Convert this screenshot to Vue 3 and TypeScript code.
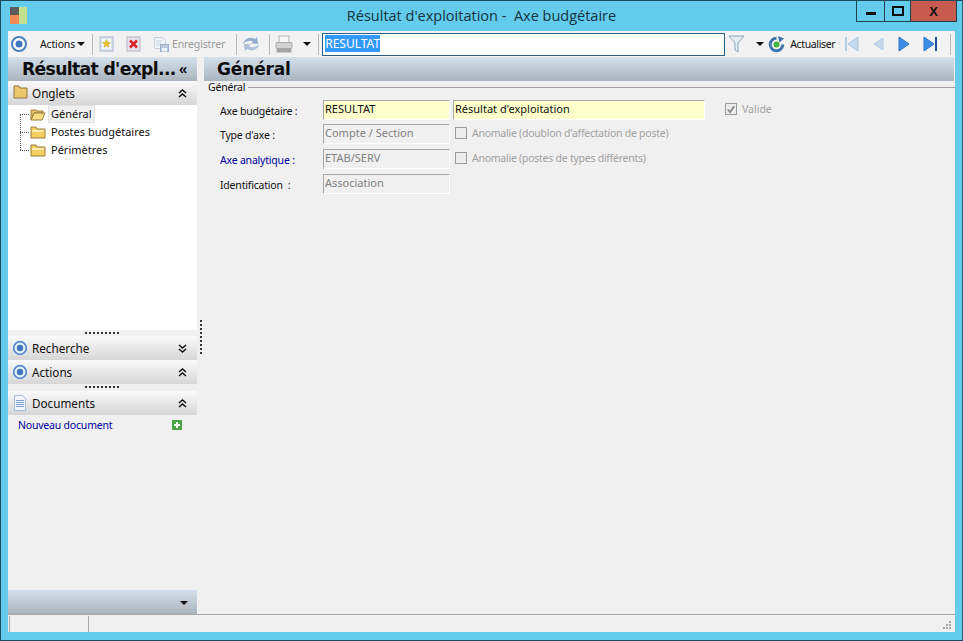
<script setup lang="ts">
const tree: { label: string; active?: boolean }[] = [
  { label: 'Général', active: true },
  { label: 'Postes budgétaires' },
  { label: 'Périmètres' }
]
</script>

<template>
  <div class="window">
    <header class="titlebar">
      <svg class="logo" width="17" height="17" viewBox="0 0 17 17">
        <rect x="0" y="0" width="9" height="8" fill="#5c5c5c" />
        <rect x="0" y="8" width="9" height="9" fill="#f08a54" />
        <rect x="9" y="0" width="8" height="17" fill="#c5e08c" />
      </svg>
      <div class="title">Résultat d'exploitation -&nbsp; Axe budgétaire</div>
      <div class="winbtns">
        <div class="wb wb-min"><span class="bar"></span></div>
        <div class="wb wb-max"><span class="box"></span></div>
        <div class="wb wb-close">X</div>
      </div>
    </header>

    <div class="client">
      <div class="toolbar">
        <svg class="tb-round" width="18" height="18" viewBox="0 0 18 18">
          <circle cx="9" cy="9" r="7" fill="#fff" stroke="#4a7fc0" stroke-width="2" />
          <circle cx="9" cy="9" r="3.5" fill="#3f78c0" />
        </svg>
        <span class="tb-text actions">Actions</span>
        <span class="caret c-actions"></span>
        <span class="sep s1"></span>
        <svg class="ic i-new" width="15" height="16" viewBox="0 0 15 16">
          <rect x="1" y="1" width="13" height="14" fill="#dfe6f0" stroke="#aab6c8" />
          <rect x="3" y="3" width="9" height="10" fill="#f4f6fa" />
          <path d="M7.500 3.500l1.200 2.700 2.800.3-2.100 1.900.6 2.800-2.500-1.400-2.500 1.400.6-2.800-2.100-1.900 2.800-.3z" fill="#efc12c" stroke="#c9a02a" stroke-width=".5" />
        </svg>
        <svg class="ic i-del" width="15" height="16" viewBox="0 0 15 16">
          <rect x="1" y="1" width="13" height="14" fill="#e6e3ea" stroke="#b4b4c4" />
          <path d="M4 4.500l7 7M11 4.500l-7 7" stroke="#d8262c" stroke-width="2.600" />
        </svg>
        <svg class="ic i-save" width="17" height="17" viewBox="0 0 17 17">
          <path d="M1.500 1.500h8l3 3v8h-11z" fill="#f1f4f8" stroke="#c8d0dc" />
          <path d="M3 5h6M3 7h5M3 9h4" stroke="#ccd5e2" />
          <rect x="7.500" y="8.500" width="8" height="7" fill="#b7c8df" stroke="#9db0ca" />
          <rect x="9" y="12" width="5" height="3.500" fill="#eef2f7" />
        </svg>
        <span class="tb-text disabled save">Enregistrer</span>
        <span class="sep s2"></span>
        <svg class="ic i-sync" width="18" height="18" viewBox="0 0 18 18">
          <path d="M1 9c1-5 7-8 12-5l2-2 1 7-7-.5 2-2C8 5 4 6 1 9z" fill="#93aecd" />
          <path d="M17 9.500c-1 5-7 7.500-12 4.500l-2 2-1-7 7 .5-2 2c3 1.500 7 .5 10-2z" fill="#aac0d8" />
        </svg>
        <span class="sep s3"></span>
        <svg class="ic i-print" width="18" height="18" viewBox="0 0 18 18">
          <rect x="4" y="1" width="10" height="7" fill="#f6f6f6" stroke="#b4b4b4" />
          <rect x="1" y="7.500" width="16" height="6" rx="1" fill="#d2d2d2" stroke="#a9a9a9" />
          <rect x="1.500" y="13.500" width="15" height="4" rx="1" fill="#a6a6a6" />
        </svg>
        <span class="caret c-print"></span>
        <span class="sep s4"></span>
        <div class="search"><span class="sel">RESULTAT</span></div>
        <svg class="ic i-filter" width="17" height="18" viewBox="0 0 17 18">
          <path d="M1 1h15l-6 7v9l-3-2V8z" fill="#e4ecf4" stroke="#8fa6bc" />
        </svg>
        <span class="caret c-filter"></span>
        <svg class="ic i-refresh" width="17" height="17" viewBox="0 0 17 17">
          <path d="M8.500 2.200a6.300 6.300 0 1 0 6.300 6.300" fill="none" stroke="#3f74ad" stroke-width="3" />
          <path d="M10 0l6 2.500L11.500 6.500z" fill="#3f74ad" />
          <circle cx="8.500" cy="8.500" r="3" fill="#3eb53a" />
        </svg>
        <span class="tb-text refresh">Actualiser</span>
        <svg class="ic nav n1" width="15" height="16" viewBox="0 0 15 16">
          <rect x="1" y="1" width="2" height="14" fill="#b4cfe8" />
          <path d="M14 1v14L4 8z" fill="#c5daee" stroke="#a9c6e2" />
        </svg>
        <svg class="ic nav n2" width="12" height="16" viewBox="0 0 12 16">
          <path d="M11 2v12L2 8z" fill="#c5daee" stroke="#b0cbe5" />
        </svg>
        <svg class="ic nav n3" width="12" height="16" viewBox="0 0 12 16">
          <path d="M1 1v14l10-7z" fill="#3a8ee6" stroke="#2f77c4" />
        </svg>
        <svg class="ic nav n4" width="15" height="16" viewBox="0 0 15 16">
          <path d="M1 1v14l10-7z" fill="#3a8ee6" stroke="#2f77c4" />
          <rect x="12" y="1" width="2" height="14" fill="#1d4f9a" />
        </svg>
        <span class="sep s5"></span>
      </div>

      <div class="body">
        <aside class="left">
          <div class="band left-head">
            <span class="left-title">Résultat d'expl...</span>
            <span class="chev-left">«</span>
          </div>
          <div class="sect">
            <svg class="sect-ic" width="15" height="14" viewBox="0 0 15 14">
              <path d="M1 1h5l1 2h7v10H1z" fill="#eec66a" stroke="#8c7440" />
            </svg>
            <span class="sect-label">Onglets</span>
            <span class="dbl">
              <svg width="9" height="9" viewBox="0 0 9 9"><path d="M1 4l3.500-3L8 4M1 8l3.500-3L8 8" fill="none" stroke="#111" stroke-width="1.500" /></svg>
            </span>
          </div>
          <div class="tree">
            <span class="tree-line"></span>
            <div v-for="t in tree" :key="t.label" class="node">
              <span class="dash"></span>
              <svg class="folder" width="16" height="13" viewBox="0 0 16 13">
                <template v-if="t.active">
                  <path d="M1 2h5l1 1h6v2H4L1 12z" fill="#e7c266" stroke="#9a7e3a" />
                  <path d="M4 5h11l-3 7H1z" fill="#f8dc86" stroke="#9a7e3a" />
                </template>
                <template v-else>
                  <path d="M1 1h5l1 2h8v9H1z" fill="#f3cf60" stroke="#9a7e3a" />
                  <rect x="2" y="4" width="12" height="2" fill="#fbeeb0" />
                </template>
              </svg>
              <span class="node-label" :class="{ active: t.active }">{{ t.label }}</span>
            </div>
          </div>
          <div class="split"><span class="dots"></span></div>
          <div class="sect">
            <svg class="sect-ic round" width="16" height="16" viewBox="0 0 16 16">
              <circle cx="8" cy="8" r="6.300" fill="#eaf0f8" stroke="#5c8ccb" stroke-width="1.800" />
              <circle cx="8" cy="8" r="3.200" fill="#3f78c0" />
            </svg>
            <span class="sect-label">Recherche</span>
            <span class="dbl">
              <svg width="9" height="9" viewBox="0 0 9 9"><path d="M1 1l3.500 3L8 1M1 5l3.500 3L8 5" fill="none" stroke="#111" stroke-width="1.500" /></svg>
            </span>
          </div>
          <div class="sect">
            <svg class="sect-ic round" width="16" height="16" viewBox="0 0 16 16">
              <circle cx="8" cy="8" r="6.300" fill="#eaf0f8" stroke="#5c8ccb" stroke-width="1.800" />
              <circle cx="8" cy="8" r="3.200" fill="#3f78c0" />
            </svg>
            <span class="sect-label">Actions</span>
            <span class="dbl">
              <svg width="9" height="9" viewBox="0 0 9 9"><path d="M1 4l3.500-3L8 4M1 8l3.500-3L8 8" fill="none" stroke="#111" stroke-width="1.500" /></svg>
            </span>
          </div>
          <div class="split s7"><span class="dots"></span></div>
          <div class="sect">
            <svg class="sect-ic" width="14" height="16" viewBox="0 0 14 16">
              <path d="M1.500 .5h8l3 3v12h-11z" fill="#f2f6fc" stroke="#a5bbdc" />
              <path d="M3 5.500h8M3 7.500h8M3 9.500h8M3 11.500h8" stroke="#7d9fd2" />
            </svg>
            <span class="sect-label">Documents</span>
            <span class="dbl">
              <svg width="9" height="9" viewBox="0 0 9 9"><path d="M1 4l3.500-3L8 4M1 8l3.500-3L8 8" fill="none" stroke="#111" stroke-width="1.500" /></svg>
            </span>
          </div>
          <div class="docs">
            <span class="doc-link">Nouveau document</span>
            <svg width="10" height="10" viewBox="0 0 10 10">
              <rect width="10" height="10" fill="#4ea546" />
              <path d="M5 2v6M2 5h6" stroke="#fff" stroke-width="2" />
            </svg>
          </div>
          <div class="band left-foot"><span class="foot-caret"></span></div>
        </aside>

        <div class="vsplit"><span class="vdots"></span></div>

        <main class="right">
          <div class="band right-head"><span class="right-title">Général</span></div>
          <div class="group-legend">
            <span class="legend">Général</span>
            <span class="legend-line"></span>
          </div>
          <div class="form">
            <label class="lab">Axe budgétaire :</label>
            <div class="field yellow">RESULTAT</div>
            <div class="field yellow wide">Résultat d'exploitation</div>
            <div class="chk valide">
              <span class="box2 checked">
                <svg width="11" height="11" viewBox="0 0 11 11"><path d="M2 5.500l2.500 3L9 2" fill="none" stroke="#8a8a8a" stroke-width="2" /></svg>
              </span>
              <span class="valide-text">Valide</span>
            </div>

            <label class="lab">Type d'axe :</label>
            <div class="field gray">Compte / Section</div>
            <div class="chk c-span"><span class="box2"></span><span>Anomalie (doublon d'affectation de poste)</span></div>

            <label class="lab blue">Axe analytique :</label>
            <div class="field gray">ETAB/SERV</div>
            <div class="chk c-span"><span class="box2"></span><span>Anomalie (postes de types différents)</span></div>

            <label class="lab">Identification&nbsp; :</label>
            <div class="field gray">Association</div>
          </div>
        </main>
      </div>

      <footer class="status">
        <div class="st st1"></div>
        <div class="st st2"></div>
        <svg class="grip" width="10" height="10" viewBox="0 0 10 10">
          <path d="M7 1h2v2H7zM4 4h2v2H4zM7 4h2v2H7zM1 7h2v2H1zM4 7h2v2H4zM7 7h2v2H7z" fill="#a5a5a5" />
        </svg>
      </footer>
    </div>
  </div>
</template>

<style>
html, body { margin: 0; padding: 0; overflow: hidden; }
</style>

<style scoped>
.window {
  width: 963px;
  height: 641px;
  box-sizing: border-box;
  background: #63cbec;
  border: 1px solid #1d4a5c;
  border-right-color: #2a5f75;
  display: flex;
  flex-direction: column;
  font-family: "Noto Sans", "DejaVu Sans", sans-serif;
  font-size: 11px;
  color: #111;
  position: relative;
  overflow: hidden;
}
.titlebar {
  height: 30px;
  flex: none;
  position: relative;
  display: flex;
  align-items: flex-start;
}
.logo { margin: 6px 0 0 9px; }
.title {
  position: absolute;
  left: 0;
  right: 0;
  top: 5px;
  text-align: center;
  font-family: "Open Sans", "Noto Sans", sans-serif;
  font-size: 14.500px;
  line-height: 19px;
  color: #15333f;
}
.winbtns {
  margin-left: auto;
  margin-right: 5px;
  display: flex;
  height: 21px;
  border: 1px solid #20414e;
  border-top: 0;
  box-sizing: border-box;
}
.wb { display: flex; align-items: center; justify-content: center; box-sizing: border-box; }
.wb-min { width: 28px; border-right: 1px solid #20414e; }
.wb-max { width: 26px; border-right: 1px solid #20414e; }
.wb-close { width: 45px; background: #c75b50; font: bold 13px "Liberation Sans", sans-serif; color: #111; }
.bar { width: 10px; height: 3px; background: #0e0e0e; margin-top: 5px; }
.box { width: 8px; height: 6px; border: 2px solid #0e0e0e; }

.client {
  margin: 0 7px 8px;
  width: 947px;
  flex: 1;
  min-height: 0;
  background: #f0f0f0;
  display: flex;
  flex-direction: column;
}
.toolbar {
  height: 26px;
  flex: none;
  display: flex;
  align-items: center;
  position: relative;
  background: #f2f2f2;
}
.tb-round { margin-left: 2px; }
.tb-text { font-size: 10.500px; letter-spacing: -0.150px; white-space: nowrap; }
.actions { margin-left: 12px; }
.disabled { color: #9a9a9a; }
.caret { width: 0; height: 0; border-left: 4px solid transparent; border-right: 4px solid transparent; border-top: 4px solid #111; flex: none; }
.c-actions { margin-left: 2px; }
.sep { width: 1px; height: 21px; background: #b8b8b8; flex: none; }
.s1 { margin-left: 7px; }
.i-new { margin-left: 6px; }
.i-del { margin-left: 12px; }
.i-save { margin-left: 12px; }
.save { margin-left: 2px; }
.s2 { margin-left: 11px; }
.i-sync { margin-left: 5px; }
.s3 { margin-left: 9px; }
.i-print { margin-left: 5px; }
.c-print { margin-left: 10px; }
.s4 { margin-left: 7px; }
.search {
  margin-left: 3px;
  width: 403px;
  height: 23px;
  box-sizing: border-box;
  border: 1px solid #27618a;
  background: #fff;
  padding: 2px 2px;
  line-height: 16px;
  font-size: 12px;
}
.sel { background: #3399ff; color: #fff; }
.i-filter { margin-left: 3px; }
.c-filter { margin-left: 11px; }
.i-refresh { margin-left: 4px; }
.refresh { margin-left: 5px; letter-spacing: -0.350px; }
.n1 { margin-left: 9px; }
.n2 { margin-left: 13px; }
.n3 { margin-left: 14px; }
.n4 { margin-left: 13px; }
.s5 { margin-left: 12px; }

.body { flex: 1; min-height: 0; display: flex; }
.band { background: linear-gradient(#d4e0ec, #a9b4bf); }
.left { width: 189px; flex: none; display: flex; flex-direction: column; }
.left-head {
  height: 24px;
  flex: none;
  position: relative;
  display: flex;
  align-items: center;
  padding-left: 14px;
}
.left-title { font: bold 17.200px/24px "DejaVu Sans", sans-serif; letter-spacing: -0.650px; white-space: nowrap; color: #0c0c0c; }
.chev-left { position: absolute; left: 171px; top: 2px; font: bold 15px/20px "Liberation Sans", sans-serif; }
.sect {
  height: 24px;
  flex: none;
  display: flex;
  align-items: center;
  position: relative;
  background: linear-gradient(#fafafa, #d6d6d6);
}
.sect-ic { position: absolute; left: 5px; top: 4px; }
.sect-ic.round { left: 4px; }
.sect-label { margin-left: 24px; font-size: 11.700px; color: #111; }
.dbl { position: absolute; left: 170px; top: 8px; line-height: 0; }
.tree { height: 225px; flex: none; background: #fff; position: relative; }
.tree-line { position: absolute; left: 12px; top: 9px; height: 36px; border-left: 1px dotted #555; }
.node { height: 18px; display: flex; align-items: center; position: relative; }
.dash { width: 9px; margin-left: 12px; border-top: 1px dotted #555; flex: none; }
.folder { margin-left: 1px; flex: none; }
.node-label { margin-left: 3px; padding: 0 2px; font-size: 11px; line-height: 16px; color: #111; }
.node-label.active { background: #f0f0f0; border: 1px solid #e2e2e2; margin-left: 2px; }
.split { height: 6px; flex: none; display: flex; justify-content: center; background: #f0f0f0; }
.split.s7 { height: 7px; }
.dots { width: 35px; height: 2px; margin-top: 2px; background: repeating-linear-gradient(90deg, #333 0 2px, transparent 2px 4px); }
.docs {
  height: 20px;
  flex: none;
  display: flex;
  align-items: center;
  padding-left: 10px;
  justify-content: space-between;
  padding-right: 15px;
}
.doc-link { color: #0000a0; font-size: 10.500px; letter-spacing: -0.200px; }
.left-foot { margin-top: auto; height: 24px; flex: none; position: relative; }
.foot-caret { position: absolute; left: 172px; top: 11px; border-left: 4px solid transparent; border-right: 4px solid transparent; border-top: 4px solid #111; }
.vsplit { width: 7px; flex: none; position: relative; }
.vdots { position: absolute; left: 3px; top: 263px; height: 35px; width: 2px; background: repeating-linear-gradient(#333 0 2px, transparent 2px 4px); }
.right { flex: 1; min-width: 0; display: flex; flex-direction: column; }
.right-head { height: 24px; flex: none; padding-left: 13px; margin-right: 1px; }
.right-title { font: bold 17px/24px "DejaVu Sans", sans-serif; letter-spacing: -0.150px; color: #0c0c0c; }
.group-legend { display: flex; align-items: center; height: 13px; padding-left: 4px; }
.legend { font-size: 10.500px; letter-spacing: -0.200px; line-height: 13px; }
.legend-line { flex: 1; height: 1px; margin-left: 3px; background: #a0a0a0; }
.form {
  display: grid;
  grid-template-columns: 106px 130px 252px 1fr;
  grid-template-rows: 24px 25px 25px 20px;
  margin-top: 6px;
  padding-left: 13px;
  align-items: start;
}
.lab { font-size: 10.500px; letter-spacing: -0.200px; line-height: 22px; white-space: nowrap; padding-left: 3px; }
.blue { color: #0000a0; }
.field {
  height: 20px;
  width: 127px;
  box-sizing: border-box;
  padding-left: 1px;
  line-height: 15px;
  font-size: 11px;
  border-style: solid;
  border-width: 1px;
  border-color: #a8a8a8 #fff #fff #a8a8a8;
  overflow: hidden;
  white-space: nowrap;
}
.yellow { background: #ffffcc; color: #111; }
.wide { width: 252px; }
.gray { color: #808080; background: #f0f0f0; }
.chk { display: flex; align-items: center; height: 18px; color: #a2a2a2; font-size: 10.500px; letter-spacing: -0.250px; white-space: nowrap; }
.c-span { grid-column: 3 / span 2; padding-left: 2px; }
.valide { padding-left: 20px; }
.valide-text { letter-spacing: 0; }
.box2 {
  width: 12px;
  height: 12px;
  box-sizing: border-box;
  border: 1px solid #9b9b9b;
  margin-right: 5px;
  display: inline-flex;
  align-items: center;
  justify-content: center;
  background: #ececec;
  flex: none;
}
.status {
  height: 18px;
  flex: none;
  display: flex;
  position: relative;
  border-top: 1px solid #a8a8a8;
  box-sizing: border-box;
  padding-top: 1px;
}
.st { height: 100%; box-sizing: border-box; }
.st1 { width: 80px; margin-left: 1px; border-left: 1px solid #a8a8a8; border-right: 1px solid #a8a8a8; }
.st2 { flex: 1; }
.grip { position: absolute; right: 3px; bottom: 2px; }
</style>
